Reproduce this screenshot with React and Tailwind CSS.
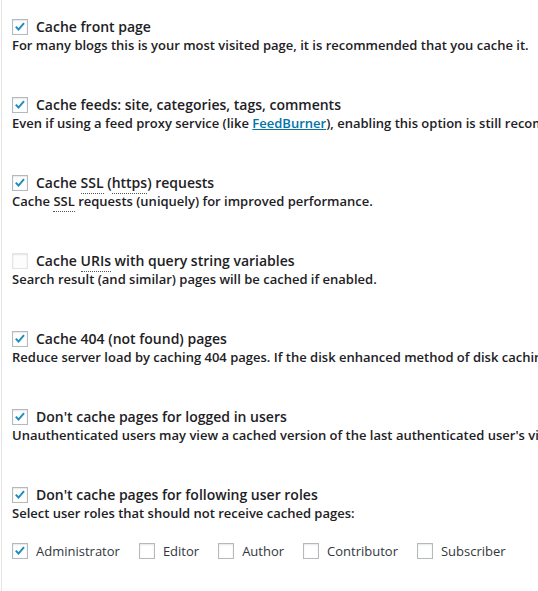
const Check = ({ checked = false, disabled = false }) => (
  <span
    className={
      "flex h-4 w-4 shrink-0 items-center justify-center border shadow-[inset_0_1px_2px_rgba(0,0,0,0.1)] " +
      (disabled ? "border-[#e2e4e7] bg-[#fdfdfd]" : "border-[#b4b9be] bg-white")
    }
  >
    {checked && (
      <svg viewBox="0 0 16 16" className="h-[14px] w-[14px]">
        <path d="M3.2 7.6 L6.3 10.9 L12.6 3.6" fill="none" stroke="#1e8cbe" strokeWidth="2.3" strokeLinecap="butt" strokeLinejoin="miter" />
      </svg>
    )}
  </span>
);

const Abbr = ({ children }) => (
  <span className="border-b border-dotted border-[#555] pb-[1px]">{children}</span>
);

const Block = ({ checked = true, disabled = false, title, desc }) => (
  <div className="mb-[43px]">
    <div className="flex h-4 items-center gap-2">
      <Check checked={checked} disabled={disabled} />
      <span className="text-[14px] font-semibold leading-4 text-[#1d2125]">{title}</span>
    </div>
    <div className="mt-[1px] whitespace-nowrap text-[13px] font-semibold leading-[18px] text-[#1d2125]">{desc}</div>
  </div>
);

const Role = ({ label, checked }) => (
  <div className="flex items-center gap-2">
    <Check checked={checked} />
    <span className="text-[13px] leading-4 text-[#32373c]">{label}</span>
  </div>
);

export default function App() {
  return (
    <div className="h-[591px] w-[538px] overflow-hidden bg-white font-['Open_Sans',sans-serif]">
      <div className="ml-[1px] h-full border-l border-[#e5e5e5] pl-[10px] pt-[19px]">
        <Block
          title="Cache front page"
          desc="For many blogs this is your most visited page, it is recommended that you cache it."
        />
        <Block
          title="Cache feeds: site, categories, tags, comments"
          desc={
            <>
              Even if using a feed proxy service (like{" "}
              <a href="#" className="text-[#0073aa] underline">FeedBurner</a>), enabling this option is still recommended.
            </>
          }
        />
        <Block
          title={
            <>
              Cache <Abbr>SSL</Abbr> (<Abbr>https</Abbr>) requests
            </>
          }
          desc={
            <>
              Cache <Abbr>SSL</Abbr> requests (uniquely) for improved performance.
            </>
          }
        />
        <Block
          checked={false}
          disabled
          title={
            <>
              Cache <Abbr>URIs</Abbr> with query string variables
            </>
          }
          desc="Search result (and similar) pages will be cached if enabled."
        />
        <Block
          title="Cache 404 (not found) pages"
          desc="Reduce server load by caching 404 pages. If the disk enhanced method of disk caching is used, 404 pages will be returned with a 200 response code. Use at your own risk."
        />
        <Block
          title="Don't cache pages for logged in users"
          desc="Unauthenticated users may view a cached version of the last authenticated user's view of a given page. Disabling this option is not recommended."
        />
        <div>
          <div className="flex h-4 items-center gap-2">
            <Check checked />
            <span className="text-[14px] font-semibold leading-4 text-[#1d2125]">Don't cache pages for following user roles</span>
          </div>
          <div className="mt-[1px] whitespace-nowrap text-[13px] font-semibold leading-[18px] text-[#1d2125]">
            Select user roles that should not receive cached pages:
          </div>
          <div className="mt-[21px] flex items-center gap-[19px]">
            <Role label="Administrator" checked />
            <Role label="Editor" />
            <Role label="Author" />
            <Role label="Contributor" />
            <Role label="Subscriber" />
          </div>
        </div>
      </div>
    </div>
  );
}
